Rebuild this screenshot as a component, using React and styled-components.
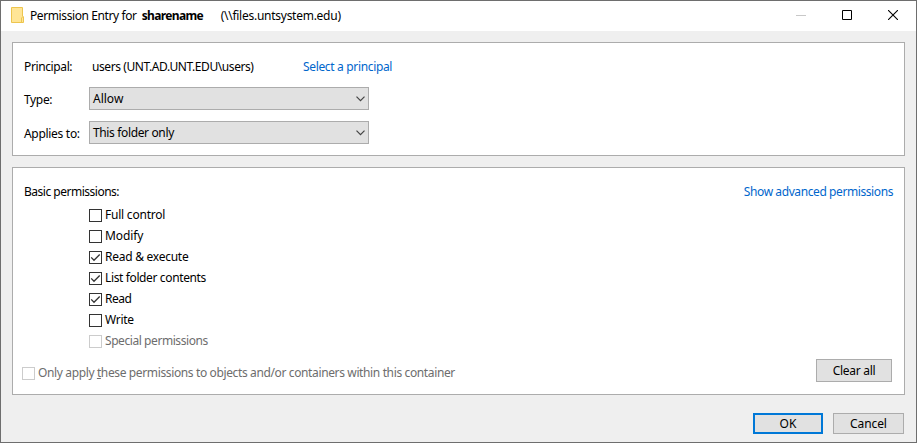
import React from "react";
import styled, { createGlobalStyle } from "styled-components";

const GlobalStyle = createGlobalStyle`
  * { box-sizing: border-box; }
  body { margin: 0; }
`;

const Dialog = styled.div`
  display: flex;
  flex-direction: column;
  width: 917px;
  height: 443px;
  border: 1px solid #6e6e6e;
  background: #efefef;
  color: #000;
  font: 12px/15px "Noto Sans", "Open Sans", sans-serif;
  white-space: pre;
  cursor: default;
`;

const Text = styled.span`
  display: block;
  flex: none;
  letter-spacing: ${(p) => p.$track || 0}px;
`;

const TitleBar = styled.header`
  display: flex;
  align-items: flex-start;
  height: 30px;
  padding: 6px 18px 0 10px;
  background: #fff;
  flex: none;

  > svg { flex: none; }
`;

const Title = styled.h1`
  display: flex;
  flex: 1;
  margin: 1px 0 0 6px;
  font: inherit;
`;

const ShareName = styled(Text)`
  margin-left: 5px;
  width: 79px;
  font-weight: 700;
`;

const WindowControls = styled.div`
  display: flex;
  gap: 36px;
  margin-top: 3px;
`;

const Body = styled.main`
  display: flex;
  flex-direction: column;
  gap: 11px;
  padding: 11px 11px 0;
`;

const Panel = styled.section`
  border: 1px solid #acacac;
  background: #fff;
`;

const PrincipalPanel = styled(Panel)`
  height: 114px;
  padding: 16px 0 0 11px;
`;

const PermissionsPanel = styled(Panel)`
  display: flex;
  flex-direction: column;
  height: 228px;
  padding: 16px 11px 0 9px;
`;

const Field = styled.div`
  display: grid;
  grid-template-columns: 65px 280px;
  align-items: start;
  margin-top: ${(p) => p.$gap || 0}px;
`;

const FieldLabel = styled(Text)`
  margin-top: ${(p) => p.$drop || 0}px;
`;

const PrincipalValue = styled.div`
  display: flex;
  padding-left: 3px;
`;

const UserName = styled(Text)`
  width: 211px;
`;

const Link = styled.a`
  color: #0066cc;
  letter-spacing: ${(p) => p.$track}px;
`;

const Dropdown = styled.div`
  display: flex;
  justify-content: space-between;
  height: 23px;
  padding: 3px 3px 0 3px;
  border: 1px solid #acacac;
  background: #e1e1e1;

  svg { margin-top: 5px; }
`;

const SectionHeader = styled.div`
  display: flex;
  justify-content: space-between;
  padding-left: 2px;
`;

const PermissionList = styled.div`
  display: flex;
  flex-direction: column;
  gap: 6px;
  padding: 8px 0 0 67px;
`;

const CheckRow = styled.label`
  display: flex;
  gap: 3px;
  color: ${(p) => (p.$disabled ? "#6d6d6d" : "#000")};
`;

const Box = styled.span`
  display: flex;
  width: 13px;
  height: 13px;
  margin-top: 2px;
  border: 1px solid ${(p) => (p.$disabled ? "#cccccc" : "#333333")};
  background: #fff;
  flex: none;
`;

const ContainerRow = styled.div`
  display: flex;
  justify-content: space-between;
  align-items: flex-start;
  padding: 11px 1px 0 0;
`;

const ContainerOption = styled.div`
  padding-top: 6px;
`;

const Button = styled.button`
  display: flex;
  justify-content: center;
  align-items: flex-start;
  width: ${(p) => p.$width}px;
  height: ${(p) => p.$height}px;
  padding: ${(p) => (p.$primary ? 1 : p.$pad)}px 0 0;
  border: ${(p) => (p.$primary ? "2px solid #0078d7" : "1px solid #acacac")};
  background: #e1e1e1;
  color: #000;
  font: inherit;
`;

const Footer = styled.footer`
  display: flex;
  justify-content: flex-end;
  gap: 10px;
  padding: 18px 12px 0 0;
`;

const FolderIcon = () => (
  <svg width="13" height="16" viewBox="0 0 13 16">
    <path d="M.5 .5h11v8.5l1 1v5.5H.5z" fill="#ffe596" stroke="#edc54e" />
    <path d="M10.5 15v-4l1.5-1.5" fill="none" stroke="#edc54e" />
  </svg>
);

const Chevron = () => (
  <svg width="9" height="6" viewBox="0 0 9 6">
    <path d="M.5 .7l4 4 4-4" fill="none" stroke="#444" strokeWidth="1.2" />
  </svg>
);

const Tick = () => (
  <svg width="11" height="11" viewBox="0 0 11 11">
    <path d="M1.2 5.4l2.8 2.9 5.7-5.8" fill="none" stroke="#333" strokeWidth="1.3" />
  </svg>
);

const Checkbox = ({ label, track, checked, disabled }) => (
  <CheckRow $disabled={disabled}>
    <Box $disabled={disabled}>{checked && <Tick />}</Box>
    <Text $track={track}>{label}</Text>
  </CheckRow>
);

const permissions = [
  { label: "Full control", track: -0.22 },
  { label: "Modify", track: -0.1 },
  { label: "Read & execute", track: -0.26, checked: true },
  { label: "List folder contents", track: -0.37, checked: true },
  { label: "Read", track: -0.5, checked: true },
  { label: "Write", track: -0.3 },
  { label: "Special permissions", track: -0.43, disabled: true },
];

export default function App() {
  return (
    <Dialog>
      <GlobalStyle />
      <TitleBar>
        <FolderIcon />
        <Title>
          <Text $track={-0.4}>Permission Entry for</Text>
          <ShareName $track={-0.64}>sharename</ShareName>
          <Text $track={-0.26}>{"(\\\\files.untsystem.edu)"}</Text>
        </Title>
        <WindowControls>
          <svg width="10" height="10" viewBox="0 0 10 10">
            <path d="M0 5.5h10" stroke="#c8c8c8" />
          </svg>
          <svg width="10" height="10" viewBox="0 0 10 10">
            <path d="M.5 .5h9v9h-9z" fill="none" stroke="#000" />
          </svg>
          <svg width="10" height="10" viewBox="0 0 10 10">
            <path d="M0 0l10 10M10 0L0 10" stroke="#000" strokeWidth="1.1" />
          </svg>
        </WindowControls>
      </TitleBar>
      <Body>
        <PrincipalPanel>
          <Field>
            <FieldLabel $track={-0.38}>Principal:</FieldLabel>
            <PrincipalValue>
              <UserName $track={-0.42}>{"users (UNT.AD.UNT.EDU\\users)"}</UserName>
              <Link $track={-0.34}>Select a principal</Link>
            </PrincipalValue>
          </Field>
          <Field $gap={13}>
            <FieldLabel $track={-0.35} $drop={5}>Type:</FieldLabel>
            <Dropdown>
              <Text>Allow</Text>
              <Chevron />
            </Dropdown>
          </Field>
          <Field $gap={11}>
            <FieldLabel $track={-0.3} $drop={5}>Applies to:</FieldLabel>
            <Dropdown>
              <Text $track={-0.36}>This folder only</Text>
              <Chevron />
            </Dropdown>
          </Field>
        </PrincipalPanel>
        <PermissionsPanel>
          <SectionHeader>
            <Text $track={-0.49}>Basic permissions:</Text>
            <Link $track={-0.41}>Show advanced permissions</Link>
          </SectionHeader>
          <PermissionList>
            {permissions.map((p) => (
              <Checkbox key={p.label} {...p} />
            ))}
          </PermissionList>
          <ContainerRow>
            <ContainerOption>
              <Checkbox
                disabled
                track={-0.37}
                label={<>Only apply <u>t</u>hese permissions to objects and/or containers within this container</>}
              />
            </ContainerOption>
            <Button $width={76} $height={23} $pad={3}>
              <Text $track={-0.3}>Clear all</Text>
            </Button>
          </ContainerRow>
        </PermissionsPanel>
      </Body>
      <Footer>
        <Button $width={70} $height={21} $primary>
          <Text>OK</Text>
        </Button>
        <Button $width={71} $height={21} $pad={2}>
          <Text $track={-0.1}>Cancel</Text>
        </Button>
      </Footer>
    </Dialog>
  );
}
